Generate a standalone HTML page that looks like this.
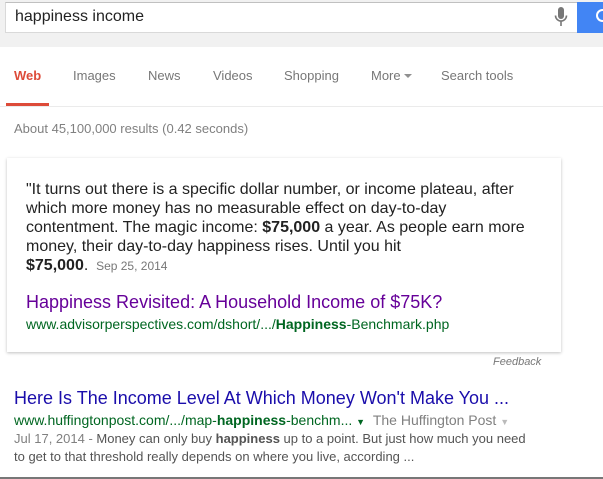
<!DOCTYPE html>
<html><head><style>
body{margin:0;width:603px;height:479px;overflow:hidden;background:#fff;font-family:"Liberation Sans",Arial,sans-serif;position:relative}
.a{position:absolute;white-space:nowrap}
</style></head><body>
<div class="a" style="left:0;top:0;width:603px;height:47px;background:#f1f1f1"></div>
<div class="a" style="left:5px;top:2px;width:571px;height:29px;background:#fff;border:1px solid #d9d9d9;border-top-color:#c0c0c0"></div>
<div class="a" style="left:15px;top:8px;font-size:16px;color:#222">happiness income</div>
<svg class="a" style="left:554px;top:7px" width="14" height="20" viewBox="0 0 14 20"><rect x="4" y="0" width="6" height="12" rx="3" fill="#777"/><path d="M1.5 8.5a5.5 5.5 0 0 0 11 0M7 14v5" stroke="#777" stroke-width="1.6" fill="none"/></svg>
<div class="a" style="left:577px;top:2px;width:26px;height:31px;background:#4285f4"></div>
<div class="a" style="left:596px;top:9px;width:9px;height:9px;border:2px solid #fff;border-radius:50%"></div>
<div class="a" style="left:14px;top:68px;font-size:13px;color:#dd4b39;font-weight:bold">Web</div>
<div class="a" style="left:73px;top:68px;font-size:13px;color:#777">Images</div>
<div class="a" style="left:148px;top:68px;font-size:13px;color:#777">News</div>
<div class="a" style="left:213px;top:68px;font-size:13px;color:#777">Videos</div>
<div class="a" style="left:284px;top:68px;font-size:13px;color:#777">Shopping</div>
<div class="a" style="left:371px;top:68px;font-size:13px;color:#777">More</div>
<div class="a" style="left:404px;top:74px;width:0;height:0;border-left:4px solid transparent;border-right:4px solid transparent;border-top:4px solid #909090"></div>
<div class="a" style="left:441px;top:68px;font-size:13px;color:#777">Search tools</div>
<div class="a" style="left:0;top:106px;width:603px;height:1px;background:#ebebeb"></div>
<div class="a" style="left:6px;top:103px;width:43px;height:3px;background:#dd4b39"></div>
<div class="a" style="left:14px;top:121px;font-size:13px;color:#808080">About 45,100,000 results (0.42 seconds)</div>
<div class="a" style="left:7px;top:158px;width:554px;height:194px;background:#fff;box-shadow:0 1px 3px rgba(0,0,0,.25)"></div>
<div class="a" style="left:26px;top:180px;font-size:16px;line-height:19px;color:#222">"It turns out there is a specific dollar number, or income plateau, after<br>which more money has no measurable effect on day-to-day<br>contentment. The magic income: <b>$75,000</b> a year. As people earn more<br>money, their day-to-day happiness rises. Until you hit<br><b>$75,000</b>. <span style="font-size:12px;color:#777">&nbsp;Sep 25, 2014</span></div>
<div class="a" style="left:26px;top:292px;font-size:18px;color:#660099">Happiness Revisited: A Household Income of $75K?</div>
<div class="a" style="left:26px;top:316px;font-size:14px;color:#006621">www.advisorperspectives.com/dshort/.../<b>Happiness</b>-Benchmark.php</div>
<div class="a" style="left:493px;top:356px;font-size:11px;font-style:italic;color:#777">Feedback</div>
<div class="a" style="left:14px;top:388px;font-size:18px;color:#1a0dab">Here Is The Income Level At Which Money Won't Make You ...</div>
<div class="a" style="left:14px;top:412px;font-size:14px;color:#006621">www.huffingtonpost.com/.../map-<b>happiness</b>-benchm... <span style="font-size:9px">▼</span> <span style="color:#808080">&nbsp;The Huffington Post <span style="font-size:9px;color:#bbb">▼</span></span></div>
<div class="a" style="left:14px;top:430px;font-size:13px;line-height:18px;color:#545454"><span style="color:#808080">Jul 17, 2014 - </span>Money can only buy <b>happiness</b> up to a point. But just how much you need<br>to get to that threshold really depends on where you live, according ...</div>
<div class="a" style="left:0;top:477px;width:603px;height:2px;background:#777"></div>
</body></html>
